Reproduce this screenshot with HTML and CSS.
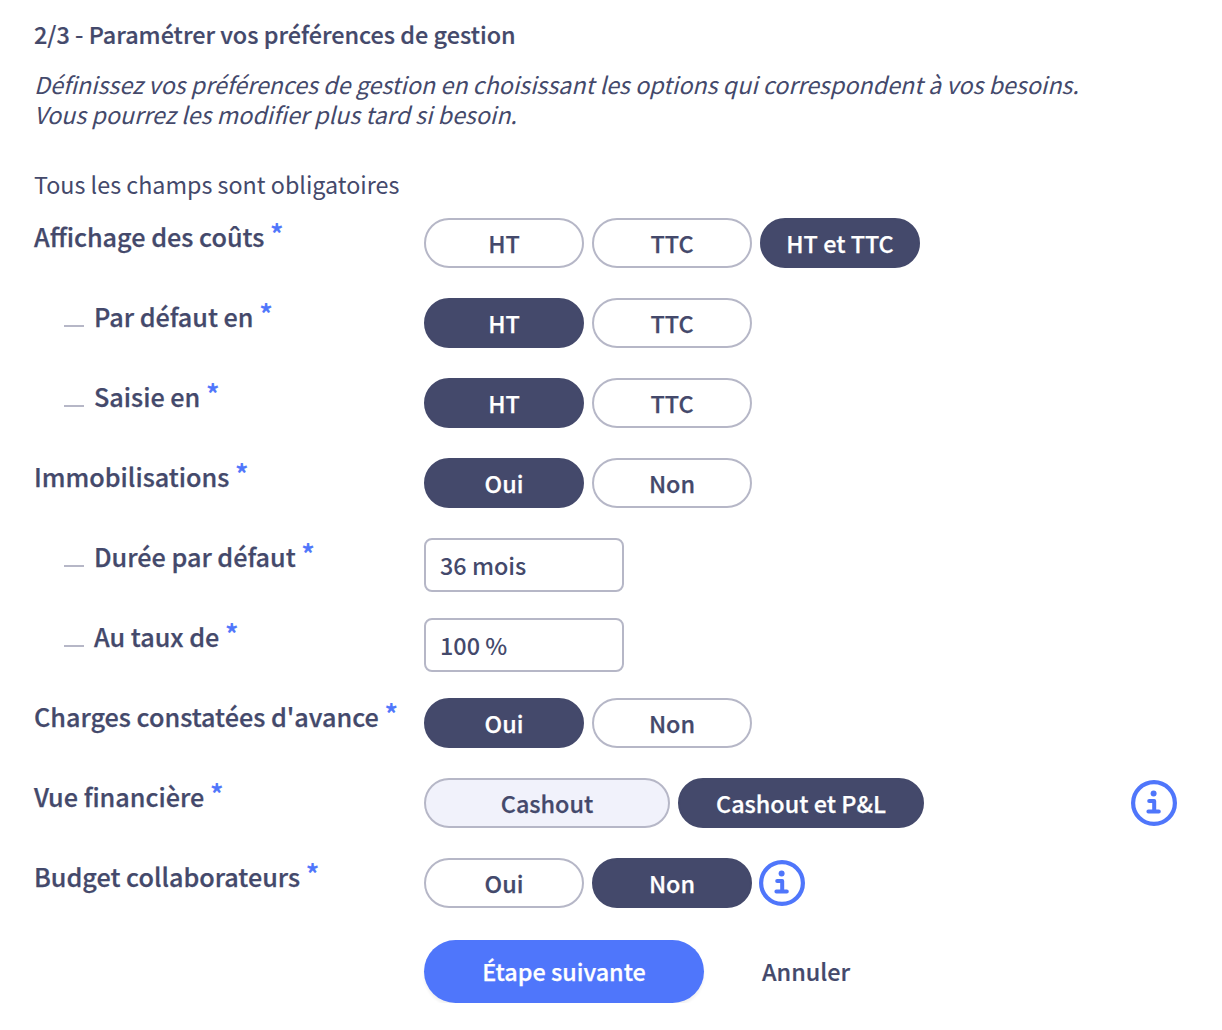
FILE: index.html
```html
<!DOCTYPE html>
<html lang="fr">
<head>
<meta charset="utf-8">
<title>Préférences de gestion</title>
<link rel="stylesheet" href="styles.css">
</head>
<body>
<main class="page">
  <h2 class="title">2/3 - Paramétrer vos préférences de gestion</h2>
  <p class="intro">Définissez vos préférences de gestion en choisissant les options qui correspondent à vos besoins.<br>Vous pourrez les modifier plus tard si besoin.</p>
  <p class="mandatory">Tous les champs sont obligatoires</p>
  <form class="form">
    <div class="row">
      <div class="label">Affichage des coûts <sup class="req">*</sup></div>
      <div class="controls">
        <button type="button" class="pill">HT</button>
        <button type="button" class="pill">TTC</button>
        <button type="button" class="pill on">HT et TTC</button>
      </div>
    </div>
    <div class="row">
      <div class="label sub">Par défaut en <sup class="req">*</sup></div>
      <div class="controls">
        <button type="button" class="pill on">HT</button>
        <button type="button" class="pill">TTC</button>
      </div>
    </div>
    <div class="row">
      <div class="label sub">Saisie en <sup class="req">*</sup></div>
      <div class="controls">
        <button type="button" class="pill on">HT</button>
        <button type="button" class="pill">TTC</button>
      </div>
    </div>
    <div class="row">
      <div class="label">Immobilisations <sup class="req">*</sup></div>
      <div class="controls">
        <button type="button" class="pill on">Oui</button>
        <button type="button" class="pill">Non</button>
      </div>
    </div>
    <div class="row">
      <div class="label sub">Durée par défaut <sup class="req">*</sup></div>
      <div class="controls"><div class="field">36 mois</div></div>
    </div>
    <div class="row">
      <div class="label sub">Au taux de <sup class="req">*</sup></div>
      <div class="controls"><div class="field">100 %</div></div>
    </div>
    <div class="row">
      <div class="label">Charges constatées d'avance <sup class="req">*</sup></div>
      <div class="controls">
        <button type="button" class="pill on">Oui</button>
        <button type="button" class="pill">Non</button>
      </div>
    </div>
    <div class="row">
      <div class="label">Vue financière <sup class="req">*</sup></div>
      <div class="controls">
        <button type="button" class="pill wide hover">Cashout</button>
        <button type="button" class="pill wide on">Cashout et P&amp;L</button>
        <svg class="info far" viewBox="0 0 46 46" aria-hidden="true">
          <circle cx="23" cy="23" r="20.9" fill="none" stroke="#4f76fb" stroke-width="4.2"/>
          <circle cx="22.6" cy="13.6" r="3" fill="#4f76fb"/>
          <path d="M18.2 21h5v10.6M17.4 31.6h10.4" fill="none" stroke="#4f76fb" stroke-width="4" stroke-linecap="round" stroke-linejoin="round"/>
        </svg>
      </div>
    </div>
    <div class="row">
      <div class="label">Budget collaborateurs <sup class="req">*</sup></div>
      <div class="controls">
        <button type="button" class="pill">Oui</button>
        <button type="button" class="pill on">Non</button>
        <svg class="info near" viewBox="0 0 46 46" aria-hidden="true">
          <circle cx="23" cy="23" r="20.9" fill="none" stroke="#4f76fb" stroke-width="4.2"/>
          <circle cx="22.6" cy="13.6" r="3" fill="#4f76fb"/>
          <path d="M18.2 21h5v10.6M17.4 31.6h10.4" fill="none" stroke="#4f76fb" stroke-width="4" stroke-linecap="round" stroke-linejoin="round"/>
        </svg>
      </div>
    </div>
    <div class="actions">
      <button type="button" class="submit">Étape suivante</button>
      <button type="button" class="cancel">Annuler</button>
    </div>
  </form>
</main>
</body>
</html>
```
FILE: styles.css
```css
* { box-sizing: border-box; }
html, body { margin: 0; padding: 0; background: #fff; }
body {
  font-family: "Noto Sans CJK SC", "Source Sans Pro", "Open Sans", sans-serif;
  color: #44496b;
  font-size: 23.3px;
  line-height: 30px;
}
.page { padding: 19px 34px 0; width: 1222px; }
.title { margin: 0; font-size: 23.4px; line-height: 30px; font-weight: 500; -webkit-text-stroke: 0.2px currentColor; }
.intro { margin: 20px 0 0; font-style: italic; font-size: 23.28px; line-height: 30px; }
.mandatory { margin: 40px 0 0; font-size: 23.3px; line-height: 30px; }
.form { margin-top: 19px; }
.row { display: flex; height: 80px; }
.label { width: 390px; flex: none; font-size: 25.2px; font-weight: 500; -webkit-text-stroke: 0.25px currentColor; line-height: 30px; padding-top: 3px; white-space: nowrap; }
.label.sub { padding-left: 60px; position: relative; }
.label.sub::before { content: ""; position: absolute; left: 30px; top: 27px; width: 20px; height: 2px; background: #b6b7c7; }
.req { color: #4f76fb; font-size: 28px; line-height: 0; vertical-align: 2px; font-weight: 500; }
.controls { flex: 1; display: flex; gap: 8px; align-items: flex-start; }
.pill {
  width: 160px; height: 50px; border-radius: 25px; border: 2px solid #b6b7c7;
  background: #fff; color: #44496b; font: inherit; font-size: 23.4px; font-weight: 500;
  -webkit-text-stroke: 0.25px currentColor;
  line-height: 30px; padding: 0; text-align: center;
}
.pill.wide { width: 246px; }
.pill.hover { background: #f1f2fb; }
.pill.on { background: #44496b; border-color: #44496b; color: #fff; }
.field {
  width: 200px; height: 54px; border: 2px solid #b6b7c7; border-radius: 8px;
  padding: 10px 14px; font-size: 23.4px; font-weight: 500; line-height: 30px;
}
.info { width: 46px; height: 46px; flex: none; margin-top: 2px; }
.info.far { margin-left: auto; margin-right: 11px; }
.info.near { margin-left: -1px; }
.actions { display: flex; align-items: center; margin: 2px 0 0 390px; }
.submit {
  width: 280px; height: 63px; border: 0; border-radius: 32px; background: #4f76fb; color: #fff;
  font: inherit; font-size: 23.4px; font-weight: 500; -webkit-text-stroke: 0.25px currentColor;
  padding: 0 0 2px; box-shadow: 0 3px 3px rgba(0,0,0,.06);
}
.cancel { margin-left: 58px; border: 0; background: none; color: #44496b; font: inherit; font-size: 23.4px; font-weight: 500; -webkit-text-stroke: 0.2px currentColor; padding: 0 0 2px; }
```
